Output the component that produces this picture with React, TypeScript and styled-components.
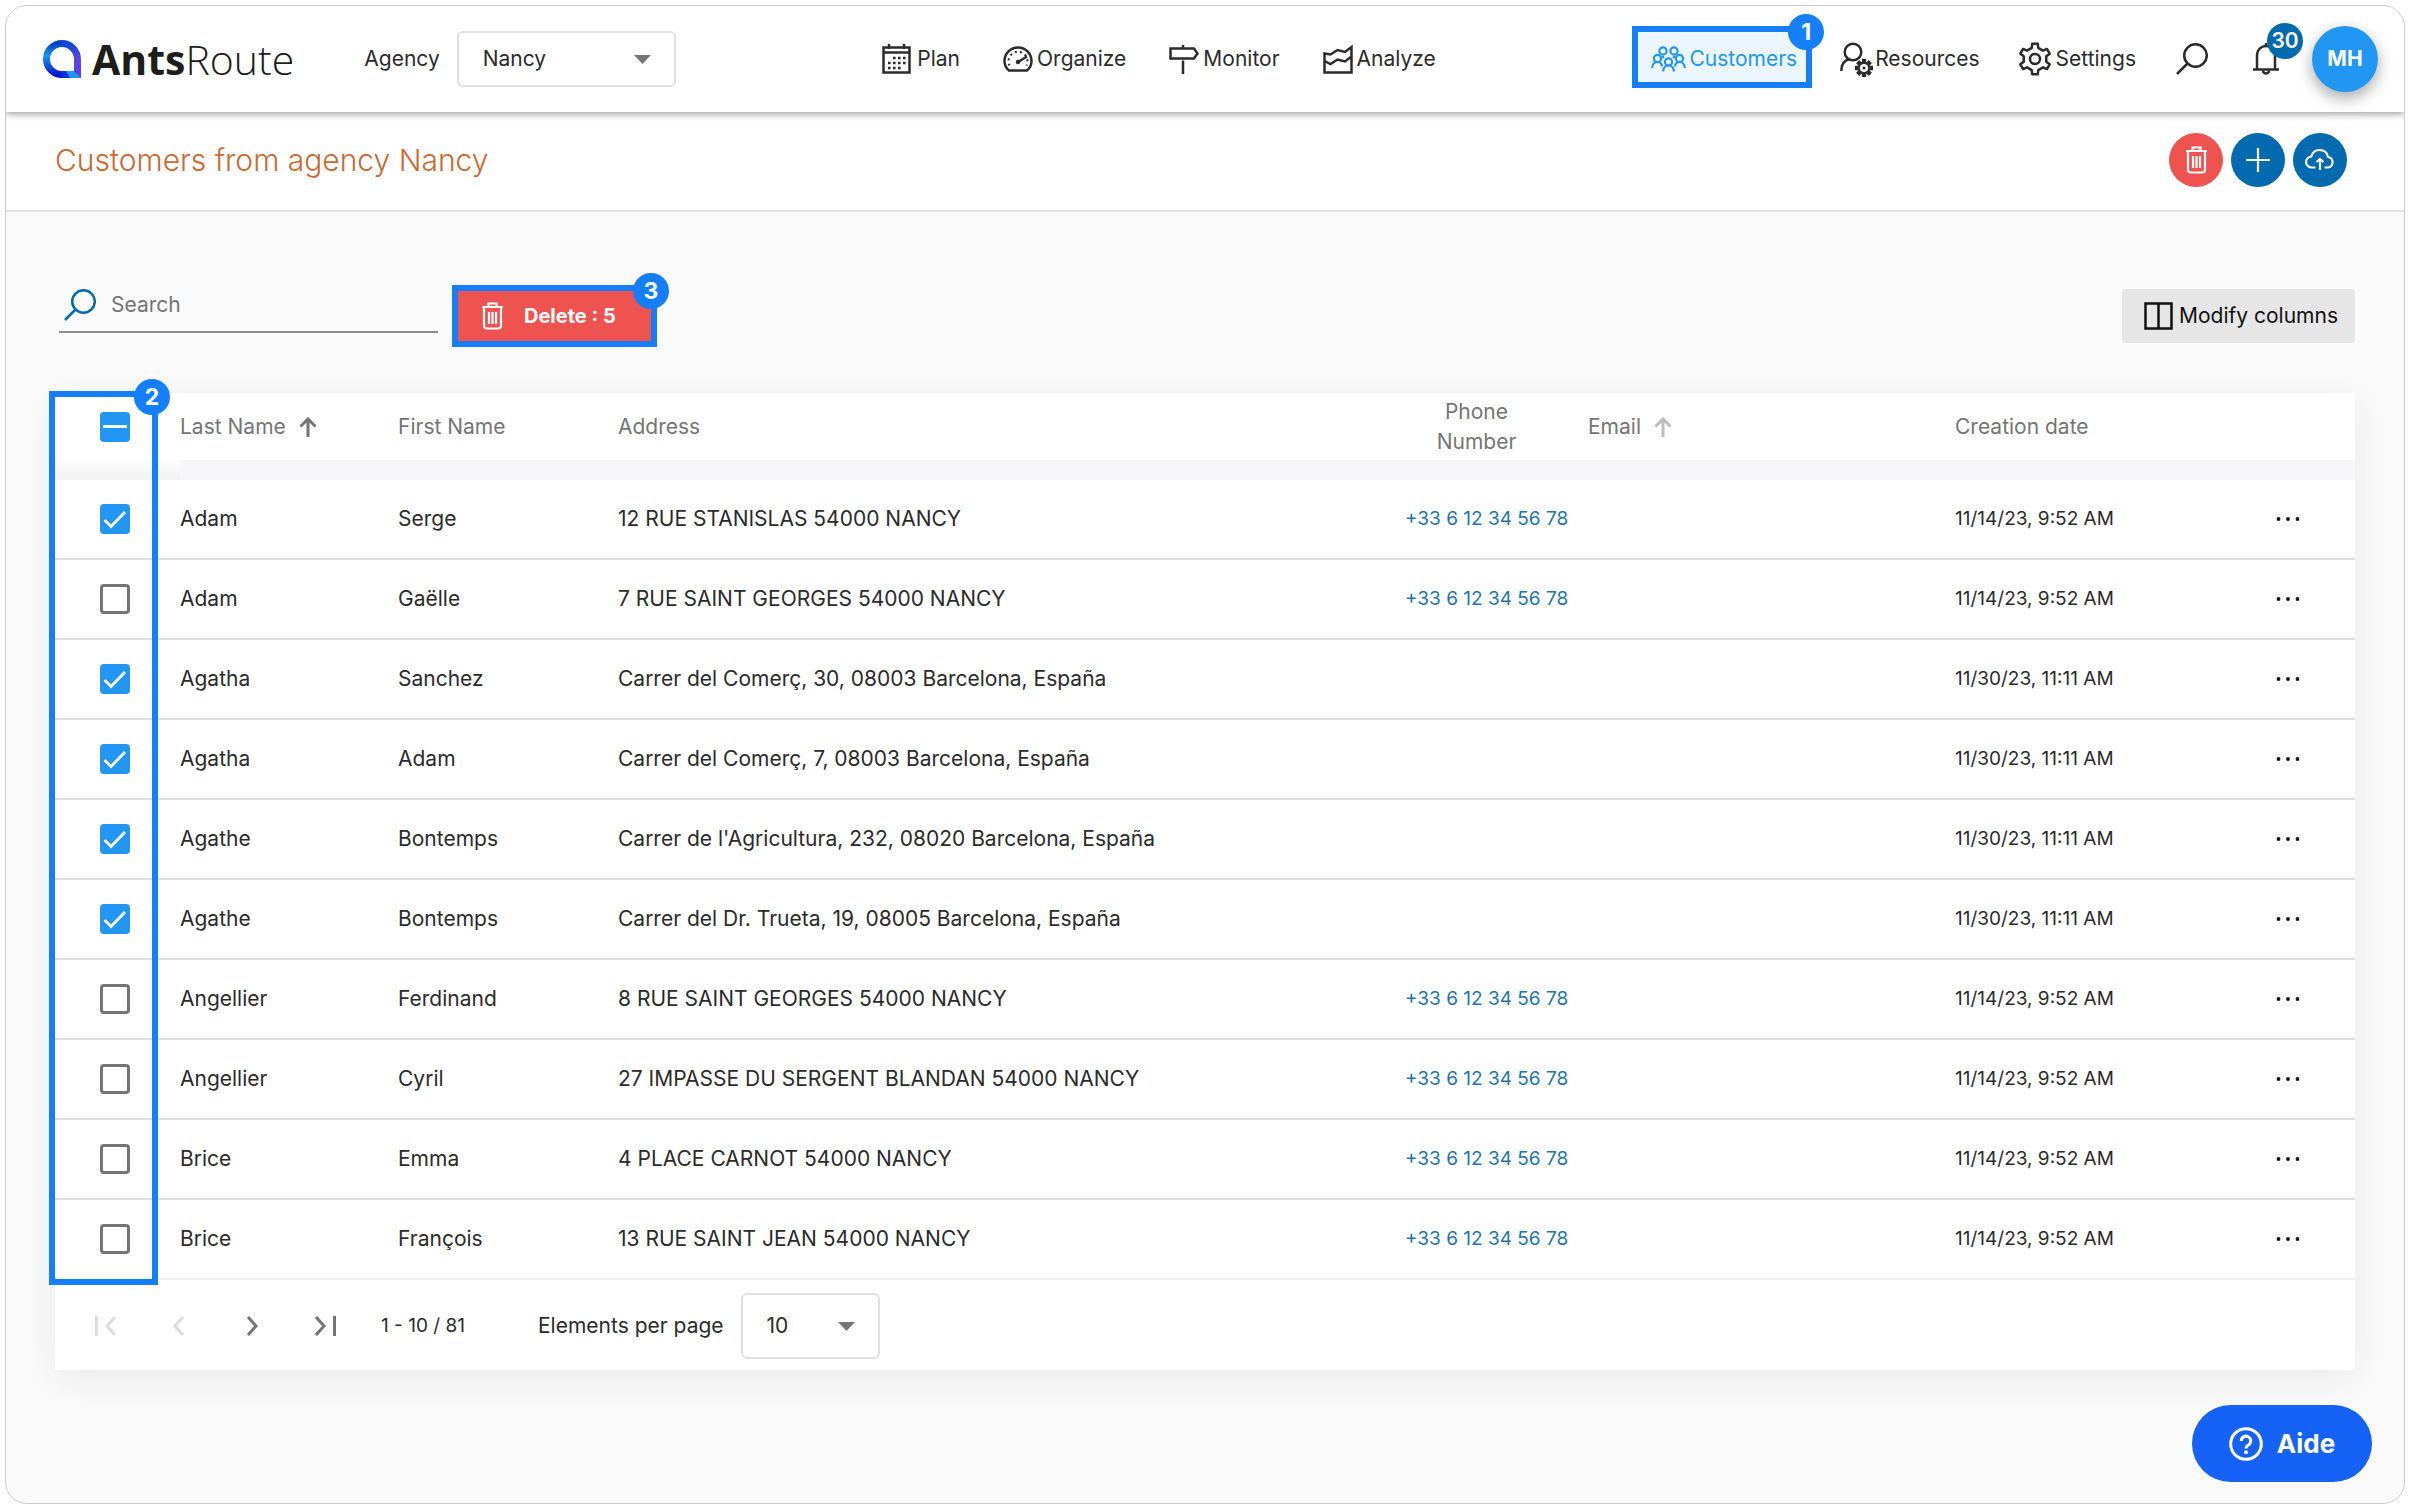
import React, { useState } from "react";
import styled, { createGlobalStyle, css } from "styled-components";

const color = {
  text: "#2b2b2b",
  muted: "#757575",
  line: "#dedfe0",
  primary: "#2196f3",
  dark: "#026aaf",
  danger: "#ef5350",
  mark: "#157efb",
};

const GlobalStyle = createGlobalStyle`
  *, *::before, *::after { box-sizing: border-box; }
  body {
    margin: 0;
    background: #fff;
    color: ${color.text};
    font-family: Inter, "Liberation Sans", sans-serif;
    font-size: 21px;
    line-height: 30px;
  }
  button, input, select { font: inherit; color: inherit; margin: 0; }
  button { border: 0; background: none; padding: 0; cursor: pointer; }
  svg { display: block; flex: none; }
`;

/* ---------- layout ---------- */

const Shell = styled.div`
  margin: 5px 5px 6px;
  min-height: calc(100vh - 11px);
  border: 1px solid #cbcbcb;
  border-radius: 22px;
  background: #fafafa;
  overflow: hidden;
`;

const Header = styled.header`
  position: relative;
  z-index: 1;
  height: 106px;
  padding: 0 26px 0 36px;
  display: flex;
  align-items: center;
  justify-content: space-between;
  background: #fff;
  box-shadow: 0 2px 7px rgba(0, 0, 0, 0.4);
`;

const Group = styled.div<{ $gap?: number }>`
  display: flex;
  align-items: center;
  gap: ${(p) => p.$gap ?? 0}px;
`;

const Logo = styled.a`
  display: flex;
  align-items: center;
  gap: 10px;
  margin-right: 70px;
  color: #1d1d1b;
  text-decoration: none;
  font-family: "Open Sans", "Noto Sans", sans-serif;
  font-size: 41px;
  line-height: 56px;
  font-weight: 300;
  b { font-weight: 700; }
`;

const FieldLabel = styled.label`
  margin-right: 17px;
`;

const SelectBox = styled.div<{ $width: number; $height: number }>`
  position: relative;
  width: ${(p) => p.$width}px;
  height: ${(p) => p.$height}px;
  select {
    appearance: none;
    width: 100%;
    height: 100%;
    padding: 0 24px;
    border: 2px solid #e0e0e0;
    border-radius: 6px;
    background: #fff;
  }
  svg {
    position: absolute;
    right: 25px;
    top: calc(50% - 4px);
    pointer-events: none;
  }
`;

const Nav = styled.nav`
  display: flex;
  align-items: center;
  gap: 43px;
  margin-left: 10px;
`;

const NavLink = styled.a<{ $gap?: number }>`
  display: flex;
  align-items: center;
  gap: ${(p) => p.$gap ?? 4}px;
  color: ${color.text};
  text-decoration: none;
`;

const marked = css`
  position: relative;
  border: 6px solid ${color.mark};
`;

const ActiveLink = styled(NavLink)`
  ${marked}
  height: 62px;
  padding: 5px 9px 0 13px;
  margin: 0 28px 5px 0;
  background: #ecf6ff;
  color: ${color.primary};
`;

const Step = styled.span`
  position: absolute;
  top: -18px;
  right: -18px;
  width: 36px;
  height: 36px;
  border-radius: 50%;
  background: ${color.mark};
  color: #fff;
  font-size: 23px;
  font-weight: 700;
  line-height: 36px;
  text-align: center;
`;

const IconButton = styled.button`
  position: relative;
  display: grid;
  place-items: center;
  width: 36px;
  height: 40px;
`;

const Count = styled.span`
  position: absolute;
  top: -16px;
  left: 19px;
  width: 36px;
  height: 36px;
  border-radius: 50%;
  background: ${color.dark};
  color: #fff;
  font-weight: 600;
  line-height: 36px;
`;

const Avatar = styled.button`
  width: 66px;
  height: 66px;
  margin-left: 28px;
  border-radius: 50%;
  background: ${color.primary};
  color: #fff;
  font-weight: 700;
  box-shadow: 0 6px 16px rgba(0, 0, 0, 0.35);
`;

const TitleBar = styled.div`
  height: 100px;
  padding: 0 57px 2px 49px;
  display: flex;
  align-items: center;
  justify-content: space-between;
  background: #fff;
  border-bottom: 2px solid #e0e0e0;
`;

const Title = styled.h1`
  margin: 0;
  color: #ca6a32;
  font-size: 30px;
  line-height: 40px;
  font-weight: 300;
`;

const RoundButton = styled.button<{ $bg: string }>`
  width: 54px;
  height: 54px;
  display: grid;
  place-items: center;
  border-radius: 50%;
  background: ${(p) => p.$bg};
  color: #fff;
`;

const Main = styled.main`
  padding: 73px 49px 0;
`;

const Toolbar = styled.div`
  display: flex;
  align-items: center;
  height: 62px;
  padding-left: 4px;
  margin-bottom: 46px;
`;

const SearchField = styled.label`
  display: flex;
  align-items: center;
  gap: 15px;
  width: 379px;
  height: 54px;
  margin: -6px 14px 0 0;
  padding-left: 5px;
  align-self: flex-start;
  border-bottom: 2px solid #8f8f8f;
  color: ${color.dark};
  input {
    flex: 1;
    min-width: 0;
    border: 0;
    padding: 0;
    outline: 0;
    background: none;
    color: ${color.text};
  }
  input::placeholder { color: ${color.muted}; opacity: 1; }
`;

const DeleteButton = styled.button`
  ${marked}
  display: flex;
  align-items: center;
  gap: 20px;
  width: 205px;
  height: 62px;
  padding-left: 23px;
  background: ${color.danger};
  color: #fff;
  font-size: 20px;
  font-weight: 700;
  white-space: nowrap;
`;

const ColumnsButton = styled.button`
  display: flex;
  align-items: center;
  gap: 6px;
  height: 54px;
  margin-left: auto;
  padding: 0 17px 0 22px;
  border-radius: 4px;
  background: #e6e6e6;
  color: #111;
`;

const Card = styled.section`
  box-shadow: 0 8px 34px rgba(40, 40, 80, 0.08);
`;

const TableWrap = styled.div`
  position: relative;
`;

const ColumnMark = styled.div`
  ${marked}
  position: absolute;
  top: -2px;
  bottom: -5px;
  left: -6px;
  width: 109px;
  pointer-events: none;
`;

const Table = styled.table`
  width: 100%;
  table-layout: fixed;
  border-collapse: separate;
  border-spacing: 0;
`;

const Col = styled.col<{ $width?: number }>`
  width: ${(p) => (p.$width ? `${p.$width}px` : "auto")};
`;

const Th = styled.th<{ $select?: boolean; $center?: boolean }>`
  height: 87px;
  padding: 0 ${(p) => (p.$center ? 40 : 0)}px 20px ${(p) => (p.$select ? 45 : 0)}px;
  text-align: ${(p) => (p.$center ? "center" : "left")};
  font-weight: 400;
  color: ${color.muted};
  background: linear-gradient(#fff, #fff) top / 100% 67px no-repeat,
    ${(p) => (p.$select ? "linear-gradient(#fdfdfd 67px, #f1f1f1)" : "#f7f7fa")};
`;

const SortLabel = styled.button`
  display: inline-flex;
  align-items: center;
  gap: 13px;
`;

const Td = styled.td<{ $select?: boolean; $last?: boolean; $compact?: boolean }>`
  height: 80px;
  padding: 0 0 0 ${(p) => (p.$select ? 45 : 0)}px;
  background: #fff;
  font-size: ${(p) => (p.$compact ? 19 : 21)}px;
  white-space: nowrap;
  border-bottom: 2px solid ${(p) => (p.$last ? "#f0f0f1" : color.line)};
`;

const Phone = styled.a`
  color: #1c75ad;
  text-decoration: none;
`;

const Check = styled.input<{ $mixed?: boolean }>`
  appearance: none;
  display: block;
  width: 30px;
  height: 30px;
  border: 3px solid ${color.muted};
  border-radius: 4px;
  background: #fff center / 24px 24px no-repeat;
  &:checked {
    border-color: ${color.primary};
    background-color: ${color.primary};
    background-image: url("data:image/svg+xml,%3Csvg xmlns='http://www.w3.org/2000/svg' viewBox='0 0 24 24'%3E%3Cpath d='M1.5 13l6.5 6.500L22 5' fill='none' stroke='white' stroke-width='2.800'/%3E%3C/svg%3E");
  }
  ${(p) =>
    p.$mixed &&
    css`
      &, &:checked {
        border-color: ${color.primary};
        background: linear-gradient(#fff, #fff) center / 24px 3px no-repeat ${color.primary};
      }
    `}
`;

const MoreButton = styled.button`
  display: grid;
  place-items: center;
  width: 40px;
  height: 40px;
  margin-left: 21px;
`;

const Pager = styled.footer`
  display: flex;
  align-items: center;
  height: 90px;
  padding: 2px 0 0 14px;
  background: #fff;
`;

const PagerButton = styled.button`
  display: grid;
  place-items: center;
  width: 73px;
  height: 48px;
  color: #757575;
  &:disabled { color: #dcdcdc; cursor: default; }
`;

const Range = styled.span`
  width: 157px;
  margin-left: 20px;
  font-size: 19px;
`;

const Help = styled.button`
  position: fixed;
  right: 38px;
  bottom: 28px;
  display: flex;
  align-items: center;
  justify-content: center;
  gap: 14px;
  width: 180px;
  height: 77px;
  border-radius: 39px;
  background: #1662f6;
  color: #fff;
  font-size: 26px;
  font-weight: 700;
`;

/* ---------- icons ---------- */

const stroke = { fill: "none", stroke: "currentColor", strokeWidth: 2.5 };

function gear(teeth: number, outer: number, inner: number, cx: number, cy: number) {
  const step = (Math.PI * 2) / teeth;
  const pts: string[] = [];
  for (let i = 0; i < teeth; i++) {
    const a = i * step - Math.PI / 2;
    [[-0.27, inner], [-0.17, outer], [0.17, outer], [0.27, inner]].forEach(([k, r]) => {
      pts.push(`${(cx + Math.cos(a + k * step) * r).toFixed(2)} ${(cy + Math.sin(a + k * step) * r).toFixed(2)}`);
    });
  }
  return `M${pts.join("L")}Z`;
}

const LogoMark = () => (
  <svg width="40" height="40" viewBox="0 0 40 40" fill="none" strokeWidth="7">
    <defs>
      <linearGradient id="mark-a" x1="0" y1="0" x2="0" y2="1">
        <stop offset="0" stopColor="#0d3ec4" />
        <stop offset=".4" stopColor="#1398ee" />
        <stop offset="1" stopColor="#0b16cf" />
      </linearGradient>
      <linearGradient id="mark-b" x1="0" y1="0" x2="0" y2="1">
        <stop offset="0" stopColor="#0d46cf" />
        <stop offset=".45" stopColor="#5a48e8" />
        <stop offset="1" stopColor="#6a3be0" />
      </linearGradient>
    </defs>
    <path d="M20 4.500A15.500 15.500 0 0 0 20 35.500" stroke="url(#mark-a)" />
    <path d="M19.500 4.500A15.800 15.800 0 0 1 35.500 20V39" stroke="url(#mark-b)" />
    <path d="M19.500 35.500H34" stroke="#0b35e0" />
    <path d="M24 32h8l7 7H28z" fill="#2196f3" />
  </svg>
);

const Caret = () => (
  <svg width="17" height="9" viewBox="0 0 17 9"><path d="M0 0h17L8.500 9z" fill="#757575" /></svg>
);

const PlanIcon = () => (
  <svg width="29" height="30" viewBox="0 0 29 30" {...stroke}>
    <path d="M1.500 3.500h26v25h-26zM1.500 8.500h26M7 0v5M22 0v5" />
    <path d="M11 14h14M6 19h19M6 24h14" strokeWidth="2.600" strokeDasharray="2.600 2.400" />
  </svg>
);

const OrganizeIcon = () => (
  <svg width="30" height="30" viewBox="0 0 30 30" {...stroke}>
    <path d="M6 26.500C3 24 1.500 20.500 1.500 17a13.500 13.500 0 0 1 27 0c0 3.500-1.500 7-4.500 9.500z" />
    <path d="M6.500 21.500A9.500 9.500 0 1 1 23.500 21.500" strokeWidth="2" strokeDasharray="2 3.300" />
    <path d="M15 18l9-5.500" />
    <circle cx="15" cy="18" r="2.200" fill="currentColor" stroke="none" />
  </svg>
);

const MonitorIcon = () => (
  <svg width="30" height="30" viewBox="0 0 30 30" {...stroke}>
    <path d="M1.500 4.500H25l3.500 5-3.500 5H1.500zM14 1v3M14 16.500V30" />
  </svg>
);

const AnalyzeIcon = () => (
  <svg width="30" height="30" viewBox="0 0 30 30" {...stroke}>
    <path d="M1.500 9.500v19h27V3L22 8l-7.500-2-7 4.500zM1.500 17l6 3 7-4.500 7.500 2 6.500-5" />
  </svg>
);

const CustomersIcon = () => (
  <svg width="35" height="26" viewBox="0 0 35 26" {...stroke} strokeWidth="2.200">
    <circle cx="12" cy="5" r="3.600" />
    <circle cx="23" cy="5" r="3.600" />
    <circle cx="6.500" cy="12.500" r="3.600" />
    <circle cx="28.500" cy="12.500" r="3.600" />
    <circle cx="17.500" cy="16" r="3.600" />
    <path d="M1.200 22c0-3.500 2-6 5.300-6s4.300 2 4.500 4.500M33.800 22c0-3.500-2-6-5.300-6s-4.300 2-4.500 4.500M12.200 25.500c0-3.500 2-6 5.300-6s5.300 2.500 5.300 6M11 10l2 2M24 10l-2 2" />
  </svg>
);

const ResourcesIcon = () => (
  <svg width="33" height="35" viewBox="0 0 33 35" {...stroke}>
    <circle cx="13" cy="10" r="8.300" />
    <path d="M1.300 29c0-6.500 2.700-10.500 8-12" />
    <path d={gear(8, 8, 5.2, 24, 26)} strokeWidth="2.200" />
    <circle cx="24" cy="26" r="1.500" fill="currentColor" stroke="none" />
  </svg>
);

const SettingsIcon = () => (
  <svg width="34" height="34" viewBox="0 0 34 34" {...stroke} strokeLinejoin="round">
    <path d={gear(6, 15.6, 11.6, 17, 17)} />
    <circle cx="17" cy="17" r="5" />
  </svg>
);

const SearchIcon = () => (
  <svg width="32" height="32" viewBox="0 0 32 32" {...stroke}>
    <circle cx="19.500" cy="12.500" r="11.300" />
    <path d="M11.500 20.500L1 31" />
  </svg>
);

const BellIcon = () => (
  <svg width="26" height="34" viewBox="0 0 26 34" {...stroke}>
    <path d="M4 27V13a9 9 0 0 1 18 0v14M0 27.500h26M13 1v3" />
    <path d="M10 28.500a3 3 0 1 0 6 0" />
  </svg>
);

const TrashIcon = () => (
  <svg width="23" height="28" viewBox="0 0 23 28" {...stroke} strokeWidth="2.200">
    <path d="M1 5h21M7.500 5V1.500h8V5M3 5v18.500q0 3 3 3h11q3 0 3-3V5M8 10v12M11.500 10v12M15 10v12" />
  </svg>
);

const PlusIcon = () => (
  <svg width="24" height="24" viewBox="0 0 24 24" {...stroke} strokeWidth="2.200"><path d="M12 0v24M0 12h24" /></svg>
);

const CloudIcon = () => (
  <svg width="30" height="24" viewBox="0 0 30 24" {...stroke} strokeWidth="2.200">
    <path d="M10.500 19.500H7a5.500 5.500 0 0 1-.8-11C7.500 4.500 10.500 2 14.500 2c4.500 0 7.800 2.800 8.500 7a5.300 5.300 0 0 1 0 10.500h-3.500M15 22V12M11.500 14L15 11l3.500 3" />
  </svg>
);

const ColumnsIcon = () => (
  <svg width="29" height="28" viewBox="0 0 29 28" {...stroke}><path d="M1.500 1.500h26v25h-26zM14.500 1v26" /></svg>
);

const ArrowUp = ({ faded }: { faded?: boolean }) => (
  <svg width="18" height="20" viewBox="0 0 18 20" fill="none" stroke={faded ? "#bdbdbd" : "#757575"} strokeWidth="3">
    <path d="M9 20V3M1.500 9.500L9 2l7.500 7.500" />
  </svg>
);

const MoreIcon = () => (
  <svg width="24" height="4" viewBox="0 0 24 4" fill="#111">
    <circle cx="2.500" cy="2" r="1.900" /><circle cx="12" cy="2" r="1.900" /><circle cx="21.500" cy="2" r="1.900" />
  </svg>
);

const Chevron = ({ d }: { d: string }) => (
  <svg width="22" height="20" viewBox="0 0 22 20" {...stroke} strokeWidth="3"><path d={d} /></svg>
);

const HelpIcon = () => (
  <svg width="34" height="34" viewBox="0 0 34 34" {...stroke} strokeWidth="3">
    <circle cx="17" cy="17" r="15.300" />
    <path d="M12.300 14a4.700 4.700 0 1 1 7.300 3.800c-1.900 1.200-2.600 2-2.600 3.700" />
    <circle cx="17" cy="25.300" r="2" fill="currentColor" stroke="none" />
  </svg>
);

/* ---------- data ---------- */

const PHONE = "+33 6 12 34 56 78";
const NOV14 = "11/14/23, 9:52 AM";
const NOV30 = "11/30/23, 11:11 AM";

const customers = [
  { last: "Adam", first: "Serge", address: "12 RUE STANISLAS 54000 NANCY", phone: PHONE, date: NOV14, on: true },
  { last: "Adam", first: "Gaëlle", address: "7 RUE SAINT GEORGES 54000 NANCY", phone: PHONE, date: NOV14, on: false },
  { last: "Agatha", first: "Sanchez", address: "Carrer del Comerç, 30, 08003 Barcelona, España", phone: "", date: NOV30, on: true },
  { last: "Agatha", first: "Adam", address: "Carrer del Comerç, 7, 08003 Barcelona, España", phone: "", date: NOV30, on: true },
  { last: "Agathe", first: "Bontemps", address: "Carrer de l'Agricultura, 232, 08020 Barcelona, España", phone: "", date: NOV30, on: true },
  { last: "Agathe", first: "Bontemps", address: "Carrer del Dr. Trueta, 19, 08005 Barcelona, España", phone: "", date: NOV30, on: true },
  { last: "Angellier", first: "Ferdinand", address: "8 RUE SAINT GEORGES 54000 NANCY", phone: PHONE, date: NOV14, on: false },
  { last: "Angellier", first: "Cyril", address: "27 IMPASSE DU SERGENT BLANDAN 54000 NANCY", phone: PHONE, date: NOV14, on: false },
  { last: "Brice", first: "Emma", address: "4 PLACE CARNOT 54000 NANCY", phone: PHONE, date: NOV14, on: false },
  { last: "Brice", first: "François", address: "13 RUE SAINT JEAN 54000 NANCY", phone: PHONE, date: NOV14, on: false },
];

export default function App() {
  const [checked, setChecked] = useState(customers.map((c) => c.on));
  const count = checked.filter(Boolean).length;
  const all = count === checked.length;

  return (
    <>
      <GlobalStyle />
      <Shell>
        <Header>
          <Group>
            <Logo href="#"><LogoMark /><span><b>Ants</b>Route</span></Logo>
            <FieldLabel htmlFor="agency">Agency</FieldLabel>
            <SelectBox $width={219} $height={56}>
              <select id="agency"><option>Nancy</option></select>
              <Caret />
            </SelectBox>
          </Group>
          <Nav aria-label="Main">
            <NavLink href="#" $gap={6}><PlanIcon />Plan</NavLink>
            <NavLink href="#"><OrganizeIcon />Organize</NavLink>
            <NavLink href="#"><MonitorIcon />Monitor</NavLink>
            <NavLink href="#"><AnalyzeIcon />Analyze</NavLink>
          </Nav>
          <Group>
            <ActiveLink href="#" $gap={3}><CustomersIcon />Customers<Step>1</Step></ActiveLink>
            <Group $gap={38}>
              <NavLink href="#" $gap={2}><ResourcesIcon />Resources</NavLink>
              <NavLink href="#"><SettingsIcon />Settings</NavLink>
              <IconButton aria-label="Search"><SearchIcon /></IconButton>
              <IconButton aria-label="Notifications"><BellIcon /><Count>30</Count></IconButton>
            </Group>
            <Avatar>MH</Avatar>
          </Group>
        </Header>

        <TitleBar>
          <Title>Customers from agency Nancy</Title>
          <Group $gap={8}>
            <RoundButton $bg={color.danger} aria-label="Delete"><TrashIcon /></RoundButton>
            <RoundButton $bg={color.dark} aria-label="Add"><PlusIcon /></RoundButton>
            <RoundButton $bg={color.dark} aria-label="Import"><CloudIcon /></RoundButton>
          </Group>
        </TitleBar>

        <Main>
          <Toolbar>
            <SearchField>
              <SearchIcon />
              <input type="search" placeholder="Search" aria-label="Search" />
            </SearchField>
            <DeleteButton><TrashIcon />Delete : {count}<Step>3</Step></DeleteButton>
            <ColumnsButton><ColumnsIcon />Modify columns</ColumnsButton>
          </Toolbar>

          <Card>
            <TableWrap>
              <Table>
                <colgroup>
                  <Col $width={125} /><Col $width={218} /><Col $width={220} /><Col />
                  <Col $width={183} /><Col $width={367} /><Col $width={292} /><Col $width={108} />
                </colgroup>
                <thead>
                  <tr>
                    <Th $select>
                      <Check
                        type="checkbox"
                        aria-label="Select all"
                        $mixed={count > 0 && !all}
                        checked={all}
                        onChange={() => setChecked(checked.map(() => !all))}
                      />
                    </Th>
                    <Th><SortLabel>Last Name <ArrowUp /></SortLabel></Th>
                    <Th>First Name</Th>
                    <Th>Address</Th>
                    <Th $center>Phone Number</Th>
                    <Th><SortLabel>Email <ArrowUp faded /></SortLabel></Th>
                    <Th>Creation date</Th>
                    <Th aria-label="Actions" />
                  </tr>
                </thead>
                <tbody>
                  {customers.map((c, i) => {
                    const last = i === customers.length - 1;
                    return (
                      <tr key={i}>
                        <Td $select $last={last}>
                          <Check
                            type="checkbox"
                            aria-label={`Select ${c.first} ${c.last}`}
                            checked={checked[i]}
                            onChange={() => setChecked(checked.map((v, j) => (j === i ? !v : v)))}
                          />
                        </Td>
                        <Td $last={last}>{c.last}</Td>
                        <Td $last={last}>{c.first}</Td>
                        <Td $last={last}>{c.address}</Td>
                        <Td $compact $last={last}>{c.phone && <Phone href="tel:+33612345678">{c.phone}</Phone>}</Td>
                        <Td $last={last} />
                        <Td $compact $last={last}>{c.date}</Td>
                        <Td $last={last}><MoreButton aria-label="More actions"><MoreIcon /></MoreButton></Td>
                      </tr>
                    );
                  })}
                </tbody>
              </Table>
              <ColumnMark><Step>2</Step></ColumnMark>
            </TableWrap>
            <Pager>
              <PagerButton disabled aria-label="First page"><Chevron d="M1.500 0v20M20 1l-8 9 8 9" /></PagerButton>
              <PagerButton disabled aria-label="Previous page"><Chevron d="M15 1l-8 9 8 9" /></PagerButton>
              <PagerButton aria-label="Next page"><Chevron d="M7 1l8 9-8 9" /></PagerButton>
              <PagerButton aria-label="Last page"><Chevron d="M2 1l8 9-8 9M20.500 0v20" /></PagerButton>
              <Range>1 - 10 / 81</Range>
              <FieldLabel htmlFor="page-size">Elements per page</FieldLabel>
              <SelectBox $width={139} $height={66}>
                <select id="page-size"><option>10</option></select>
                <Caret />
              </SelectBox>
            </Pager>
          </Card>
        </Main>
      </Shell>
      <Help><HelpIcon />Aide</Help>
    </>
  );
}
